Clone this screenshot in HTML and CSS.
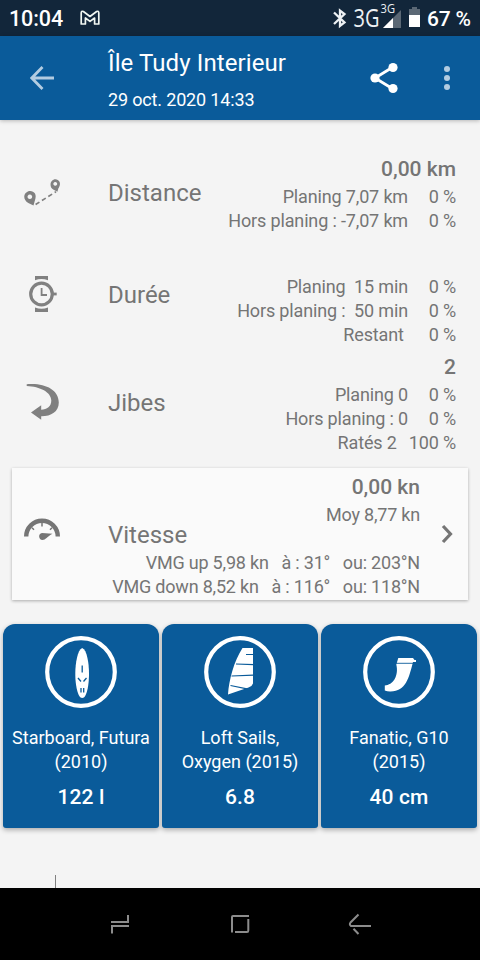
FILE: index.html
```html
<!DOCTYPE html>
<html lang="fr">
<head>
<meta charset="utf-8">
<title>Île Tudy Interieur</title>
<link rel="stylesheet" href="styles.css">
</head>
<body>
<div class="screen">
  <div class="status">
    <span class="clock">10:04</span>
    <svg class="mail" width="20" height="16" viewBox="0 0 20 16"><path d="M1.200 14V3Q1.200 .6 3.400 1.500L10 6.500L16.600 1.500Q18.800 .6 18.800 3V14H14.600V8L10 11.400L5.400 8V14Z" fill="none" stroke="#f1f7f2" stroke-width="1.700" stroke-linejoin="round"/></svg>
    <span class="grow"></span>
    <svg width="142" height="36" viewBox="332 0 142 36">
      <path d="M334 12.500L344.500 22.500L340 26V10.500L344.500 14L334 24" fill="none" stroke="#edf1f4" stroke-width="2.300"/>
      <text class="net" transform="translate(353.500 26.500) scale(.8 1)">3G</text>
      <text class="net-small" transform="translate(380.500 12.500) scale(.93 1)">3G</text>
      <path d="M383 28L401 10V28Z" fill="#5b6875"/>
      <path d="M383 28L393 18V28Z" fill="#fff"/>
      <path d="M409 9h3V7h5v2h3v18h-11Z" fill="#5b6875"/>
      <path d="M409 15h11v12h-11Z" fill="#fff"/>
      <text class="battery" x="427" y="26" textLength="44">67 %</text>
    </svg>
  </div>
  <div class="appbar">
    <svg class="back" width="24" height="24" viewBox="0 0 24 24"><path d="M24 12H2M12.500 1L1.800 12L12.500 23" fill="none" stroke="#b3cce1" stroke-width="2.800"/></svg>
    <div class="titles">
      <div class="title">Île Tudy Interieur</div>
      <div class="date">29 oct. 2020 14:33</div>
    </div>
    <svg class="share" width="28" height="32" viewBox="0 0 28 32"><path d="M23 5L5 16L23 27" fill="none" stroke="#fff" stroke-width="2.800"/><g fill="#fff"><circle cx="23" cy="5.500" r="4.600"/><circle cx="5" cy="16" r="4.600"/><circle cx="23" cy="26.500" r="4.600"/></g></svg>
    <svg class="more" width="6" height="26" viewBox="0 0 6 26" fill="#b3cce1"><circle cx="3" cy="4" r="3"/><circle cx="3" cy="13" r="3"/><circle cx="3" cy="22" r="3"/></svg>
  </div>
  <div class="content">
    <div class="row distance">
      <svg class="icon" width="36" height="36" viewBox="0 -5 36 36" fill="#808080"><path fill-rule="evenodd" d="M9.500 26.500L4.300 24C-.3 21.400-.7 16.500 1.700 14C4.500 11 9 11.400 11 14.600C12.200 17 11.600 19 10.900 21.500ZM5.800 15.500a2.300 2.300 0 1 0 .1 0Z"/><path fill-rule="evenodd" d="M33.400 12.700L29.200 10.500C25.800 8.400 26 4 27.800 2C30-.6 34-.2 35.500 2.800C36.600 5.300 35.500 7.500 34.400 9.300ZM31.200 3a1.900 1.900 0 1 0 .1 0Z"/><path d="M11.600 25.500L32 12.700" fill="none" stroke="#808080" stroke-width="1.700" stroke-dasharray="4.500 3"/></svg>
      <div class="label">Distance</div>
      <div class="values">
        <div class="head">0,00 km</div>
        <div class="line">Planing 7,07 km<span class="pct">0 %</span></div>
        <div class="line">Hors planing : -7,07 km<span class="pct">0 %</span></div>
      </div>
    </div>
    <div class="row duration">
      <svg class="icon" width="36" height="36" viewBox="0 0 36 36" fill="#808080"><path d="M11 0h13v4.300q-6.500-2.600-13 0ZM11 36h13v-4.600q-6.500 2.600-13 0Z"/><circle cx="17.500" cy="18" r="10.800" fill="none" stroke="#808080" stroke-width="3.200"/><path d="M17.600 12v7H23" fill="none" stroke="#808080" stroke-width="1.800"/><path d="M29 16.600h3.700v2.800H29Z"/></svg>
      <div class="label">Durée</div>
      <div class="values">
        <div class="head"></div>
        <div class="line">Planing&nbsp; 15 min<span class="pct">0 %</span></div>
        <div class="line">Hors planing :&nbsp; 50 min<span class="pct">0 %</span></div>
        <div class="line">Restant&nbsp;<span class="pct">0 %</span></div>
      </div>
    </div>
    <div class="row jibes">
      <svg class="icon" width="36" height="36" viewBox="0 0 36 36" fill="#808080"><path d="M2.700.2C19-1.200 34.800 4.500 34.800 18.500C34.800 28 27 32.300 17.200 32.200V35.700L7 28.500L17.200 21.300V25.700C23 25.500 27.300 22.500 27.300 16.500C27.300 8 16 2.500 2.700 1.900Z"/></svg>
      <div class="label">Jibes</div>
      <div class="values">
        <div class="head">2</div>
        <div class="line">Planing 0<span class="pct">0 %</span></div>
        <div class="line">Hors planing : 0<span class="pct">0 %</span></div>
        <div class="line">Ratés 2<span class="pct">100 %</span></div>
      </div>
    </div>
    <div class="speed">
      <svg class="gauge" width="36" height="24" viewBox="0 0 36 24"><path d="M2.200 18.500A15.800 15.800 0 0 1 33.800 18.500" fill="none" stroke="#757575" stroke-width="4.400"/><path d="M18 4v4.500M8 9.800l2 2M28 9.800l-2 2" stroke="#757575" stroke-width="1.500"/><path d="M28.500 15.800L18 15C14 15.300 14.300 22 18.600 22C21.500 22 23 18.700 28.500 15.800Z" fill="#757575"/></svg>
      <div class="speed-body">
        <div class="head">0,00 kn</div>
        <div class="line">Moy 8,77 kn</div>
        <div class="label">Vitesse</div>
        <div class="line">VMG up 5,98 kn&nbsp;&nbsp; à : 31°&nbsp;&nbsp; ou: 203°N</div>
        <div class="line">VMG down 8,52 kn&nbsp;&nbsp; à : 116°&nbsp;&nbsp; ou: 118°N</div>
      </div>
      <svg class="chevron" width="12" height="20" viewBox="0 0 12 20"><path d="M2 2L9.500 10L2 18" fill="none" stroke="#757575" stroke-width="3.200"/></svg>
    </div>
    <div class="gear">
      <div class="card">
        <svg width="72" height="72" viewBox="0 0 72 72"><circle class="ring" cx="36" cy="36" r="33.800"/><path d="M37.200 12C42 14 44 27 44 38C44 48 42 62 37.200 62C32.500 62 30.300 48 30.300 38C30.300 27 32.500 14 37.200 12Z" fill="#fff"/><path d="M37.200 29.500v7M33 42l3 3.500M41.500 42l-3 3.500M36 52v4.500M38.700 52v4.500" stroke="#0a5b9a" stroke-width="1.300"/></svg>
        <div class="name">Starboard, Futura (2010)</div>
        <div class="size">122 l</div>
      </div>
      <div class="card">
        <svg width="72" height="72" viewBox="0 0 72 72"><circle class="ring" cx="36" cy="36" r="33.800"/><path d="M38.500 12H49V47.500Q48 50.500 44.500 51.600L24 58.500C25 44 30 25 38.500 12Z" fill="#fff"/><path d="M42 18.500H49.500M32 28L49.500 28.600M27.500 40L49.500 39.200M26.500 49.500L43 52.800" stroke="#0a5b9a" stroke-width="1.200"/></svg>
        <div class="name">Loft Sails,<br>Oxygen (2015)</div>
        <div class="size">6.8</div>
      </div>
      <div class="card">
        <svg width="72" height="72" viewBox="0 0 72 72"><circle class="ring" cx="36" cy="36" r="33.800"/><path d="M35.300 22H50L51.500 24H53V26H50L49.500 28C46 41 43 55.500 27.500 55.500Q24.500 55.600 21.800 54.500V49.500C30 49 36 40 33.300 28.500Z" fill="#fff"/><path d="M33 27.300H50.500" stroke="#0a5b9a" stroke-width=".9"/></svg>
        <div class="name">Fanatic, G10 (2015)</div>
        <div class="size">40 cm</div>
      </div>
    </div>
    <div class="axis"></div>
  </div>
  <div class="navbar">
    <svg width="24" height="24" viewBox="0 0 24 24"><path d="M3 10H20V3M4 21.500V14H21"/></svg>
    <svg width="24" height="24" viewBox="0 0 24 24"><path d="M4 20.500V5Q4 4 5 4H21M20.300 7V18.500Q20.300 20 19 20H7"/></svg>
    <svg width="24" height="24" viewBox="0 0 24 24"><path d="M10.500 2.500L2.500 10.500Q1 12.500 3 14H23M5.500 16.800L10.500 22"/></svg>
  </div>
</div>
</body>
</html>
```
FILE: styles.css
```css
* { box-sizing: border-box; }
body { margin: 0; font-family: Roboto, sans-serif; color: #757575; background: #f4f4f4; }
svg { display: block; flex: none; }
.screen { width: 480px; height: 960px; display: flex; flex-direction: column; overflow: hidden; }

.status { height: 36px; flex: none; background: #12263a; display: flex; align-items: center; padding: 0 6px 0 9px; color: #fff; }
.clock { font-size: 21.5px; font-weight: 500; line-height: 36px; width: 71px; padding-top: 1px; letter-spacing: -.1px; }
.grow { flex: 1; }
.net { font: 25px "Open Sans", sans-serif; fill: #edf1f4; }
.net-small { font: 12px "Open Sans", sans-serif; fill: #edf1f4; }
.battery { font: 500 21px Roboto, sans-serif; fill: #fff; }

.appbar { height: 84px; flex: none; background: #0a5b9a; display: flex; align-items: center; padding: 0 30px; color: #fff; box-shadow: 0 1px 4px rgba(0, 0, 0, .25); z-index: 1; }
.titles { margin-left: 54px; flex: 1; height: 84px; padding-top: 11px; }
.title { font-size: 24px; line-height: 32px; white-space: nowrap; letter-spacing: .1px; }
.date { font-size: 18px; line-height: 24px; margin-top: 9px; letter-spacing: -.16px; }
.share { margin-right: 46px; }

.content { flex: 1; min-height: 0; padding-top: 33px; display: flex; flex-direction: column; }
.row { display: flex; align-items: center; padding: 0 24px; flex: none; }
.icon { margin-top: -2px; }
.label { font-size: 24px; line-height: 24px; }
.row .label { margin-left: 48px; }
.values { flex: 1; text-align: right; }
.head { height: 32px; line-height: 32px; font-size: 21px; font-weight: 500; }
.line { height: 24px; line-height: 24px; font-size: 18px; white-space: nowrap; letter-spacing: -.15px; }
.pct { display: inline-block; min-width: 48px; padding-left: 12px; }
.duration { margin-top: 10px; }
.jibes { margin-top: 4px; }

.speed { margin: 13px 12px 0; height: 132px; flex: none; padding: 1px 15px 0 12px; background: #fafafa; display: flex; align-items: center; box-shadow: 0 1px 3px rgba(0, 0, 0, .3); }
.speed-body { flex: 1; min-width: 0; text-align: right; margin: 0 21px 0 48px; }
.speed .label { text-align: left; margin: -6px 0 2px; height: 28px; line-height: 28px; }
.speed .line { letter-spacing: -.2px; }
.gauge { margin-top: -10px; }
.chevron { margin-top: -2px; }

.gear { display: flex; gap: 3px; padding: 0 3px; margin-top: 24px; flex: none; }
.card { flex: 1; height: 204px; border-radius: 12px 12px 3px 3px; background: #0a5b9a; color: #fff; display: flex; flex-direction: column; align-items: center; padding-top: 12px; text-align: center; box-shadow: 0 2px 5px rgba(0, 0, 0, .3); }
.ring { fill: none; stroke: #fff; stroke-width: 4.2; }
.name { font-size: 18px; line-height: 24px; margin-top: 18px; width: 142px; }
.size { font-size: 21px; font-weight: 500; line-height: 28px; margin-top: 9px; letter-spacing: .1px; }
.axis { width: 1px; flex: 1; margin: 47px 0 0 55px; background: #808080; }

.navbar { height: 72px; flex: none; background: #000; display: flex; align-items: center; justify-content: center; gap: 96px; z-index: 1; }
.navbar path { fill: none; stroke: #8c8c8c; stroke-width: 2; }
```
